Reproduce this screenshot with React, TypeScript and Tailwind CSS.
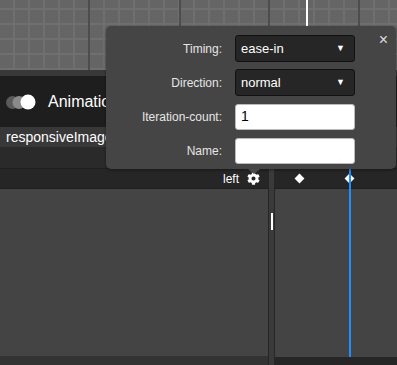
import React from 'react';
import { FaCog } from 'react-icons/fa';

const Diamond: React.FC<{ x: number }> = ({ x }) => (
  <div
    className="absolute top-[6px] w-[7px] h-[7px] bg-white rotate-45"
    style={{ left: x }}
  />
);

const Field: React.FC<{ label: string; children: React.ReactNode }> = ({ label, children }) => (
  <div className="flex items-center h-[27px]">
    <span className="w-[129px] text-right pr-[13px] text-[12px] text-[#e6e6e6]">{label}</span>
    {children}
  </div>
);

const Select: React.FC<{ value: string }> = ({ value }) => (
  <div className="w-[120px] h-[27px] flex items-center justify-between pl-[5px] pr-[9px] bg-[#262626] border border-[#111] rounded-[3px] text-[13px] text-white">
    <span>{value}</span>
    <span className="text-[9px]">▼</span>
  </div>
);

const TextBox: React.FC<{ value?: string }> = ({ value }) => (
  <div className="w-[120px] h-[26px] flex items-center pl-[5px] bg-white border border-[#bbb] rounded-[3px] text-[14px] text-black">
    {value}
  </div>
);

export default function App() {
  return (
    <div className="relative w-[397px] h-[365px] overflow-hidden bg-[#2a2a2a] font-['Liberation_Sans',Arial,sans-serif] flex flex-col">
      {/* canvas grid */}
      <div className="relative h-[70px] bg-[#656565] bg-[image:linear-gradient(to_right,#6f6f6f_2px,transparent_2px),linear-gradient(to_bottom,#6f6f6f_2px,transparent_2px)] bg-[size:15px_15px] bg-[position:13px_8px]">
        <div className="absolute left-[88px] top-0 bottom-0 w-[2px] bg-[#4d4d4d]" />
        <div className="absolute left-[179px] top-0 bottom-0 w-[2px] bg-[#4d4d4d]" />
        <div className="absolute left-[268px] top-0 bottom-0 w-[2px] bg-[#4d4d4d]" />
        <div className="absolute left-[358px] top-0 bottom-0 w-[2px] bg-[#4d4d4d]" />
        <div className="absolute left-[306px] top-0 h-[27px] w-[2px] bg-white" />
      </div>
      <div className="h-[6px] bg-[#383838]" />

      {/* toolbar */}
      <div className="h-[51px] bg-[#1e1e1e] flex items-center px-[6px] gap-[12px]">
        <svg width="30" height="16" viewBox="0 0 30 16">
          <circle cx="6.5" cy="8.5" r="6.5" fill="#5a5a5a" />
          <circle cx="13" cy="8.5" r="6.5" fill="#8a8a8a" />
          <circle cx="22" cy="8" r="7.5" fill="#fff" />
        </svg>
        <span className="text-[16px] text-white">Animation</span>
      </div>
      <div className="h-[20px] bg-[#383838] flex items-center px-[6px] text-[14px] text-white">
        responsiveImage
      </div>
      <div className="h-[22px] bg-[#2a2a2a] border-b border-[#1f1f1f]" />

      {/* timeline */}
      <div className="flex-1 flex">
        <div className="w-[268px] flex flex-col">
          <div className="h-[20px] bg-[#262626] border-b border-[#1f1f1f] flex items-center justify-end pr-[8px] gap-[8px] text-[12px] text-white">
            <span>left</span>
            <FaCog size={13} />
          </div>
          <div className="flex-1 bg-[#444]" />
          <div className="h-[9px] bg-[#333]" />
        </div>
        <div className="relative w-[7px] bg-[#3a3a3a] border-x border-[#262626]">
          <div className="absolute left-[2px] top-[44px] w-[2px] h-[17px] bg-white" />
        </div>
        <div className="relative flex-1 flex flex-col">
          <div className="relative h-[20px] bg-[#262626] border-b border-[#1f1f1f]">
            <Diamond x={21} />
            <Diamond x={71} />
          </div>
          <div className="flex-1 bg-[#444]" />
          <div className="h-[8px] bg-[#262626]" />
          <div className="absolute left-[74px] top-0 bottom-[8px] w-[2px] bg-[#1e8fff]" />
        </div>
      </div>

      {/* keyframe popover */}
      <div className="absolute left-[106px] top-[26px] w-[290px] h-[143px] bg-[#454545] rounded-[5px] shadow-[0_1px_3px_rgba(0,0,0,0.4)] pt-[9px] flex flex-col gap-[7px]">
        <button className="absolute right-[8px] top-[6px] text-[16px] leading-none text-[#ddd]">×</button>
        <Field label="Timing:">
          <Select value="ease-in" />
        </Field>
        <Field label="Direction:">
          <Select value="normal" />
        </Field>
        <Field label="Iteration-count:">
          <TextBox value="1" />
        </Field>
        <Field label="Name:">
          <TextBox />
        </Field>
        <div className="absolute left-[142px] -bottom-[5px] w-0 h-0 border-x-[6px] border-x-transparent border-t-[5px] border-t-[#4a4a4a]" />
      </div>
    </div>
  );
}
